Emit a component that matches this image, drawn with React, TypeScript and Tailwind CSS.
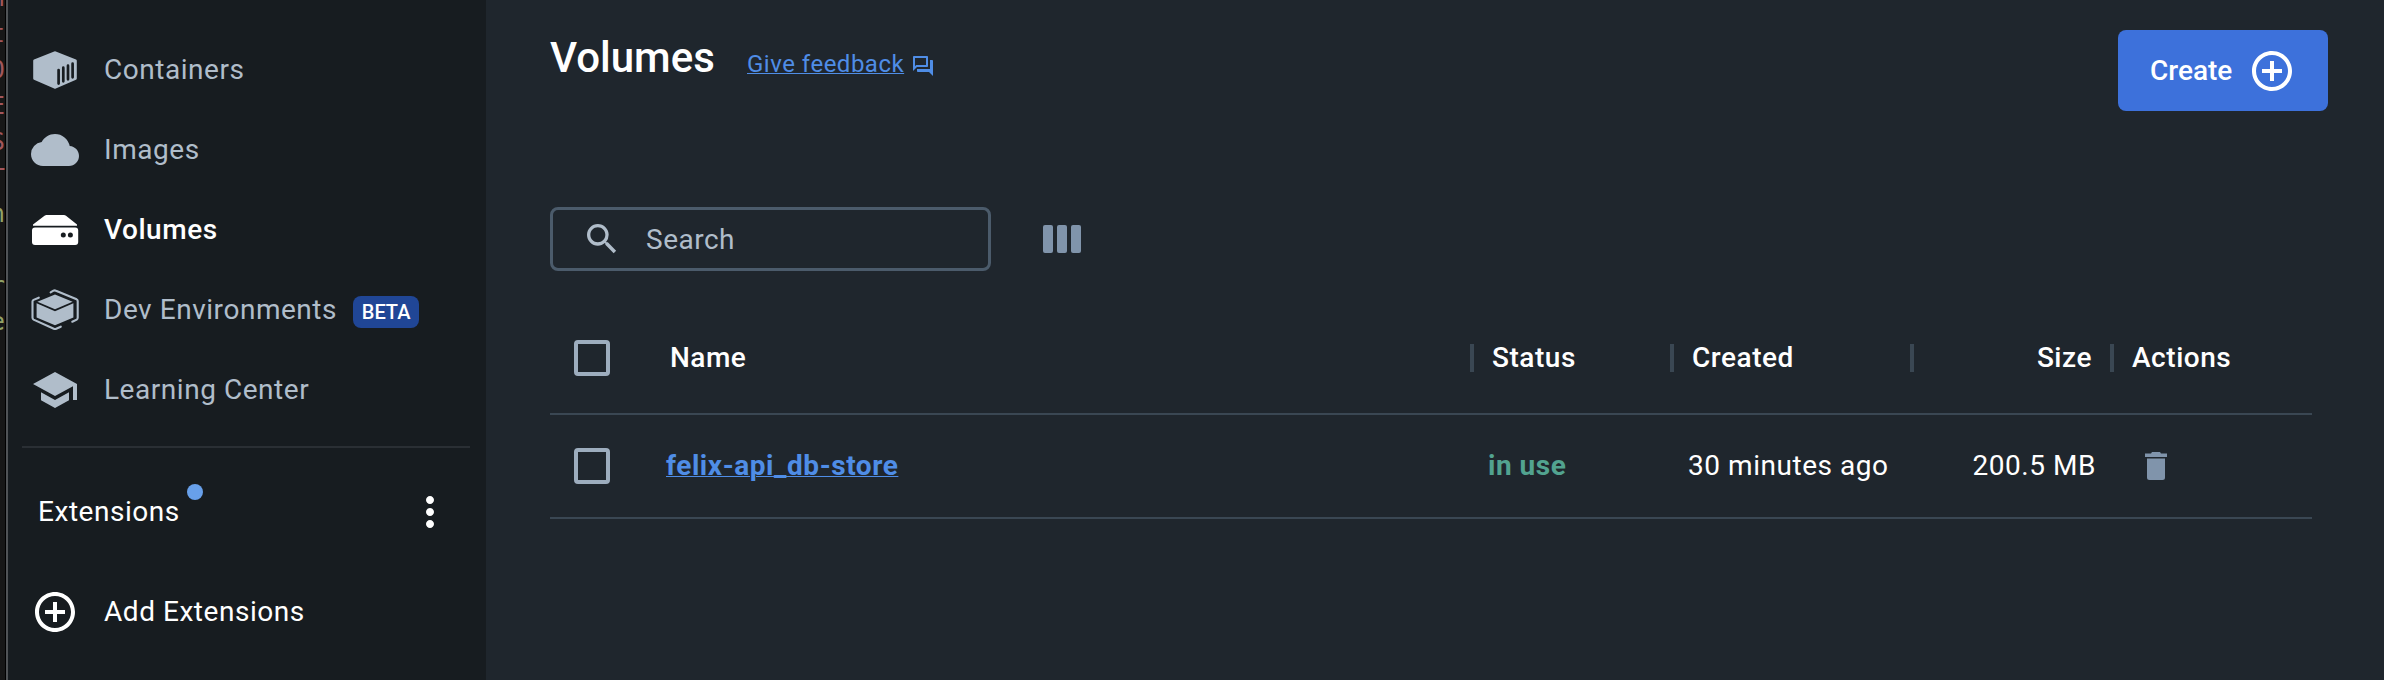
import type { ReactNode } from "react";
import {
  MdAddCircleOutline,
  MdCloud,
  MdMoreVert,
  MdOutlineForum,
  MdSchool,
  MdSearch,
} from "react-icons/md";

function ContainersIcon() {
  return (
    <svg viewBox="0 0 48 48" className="size-12">
      <path
        d="M23.2 5.4Q24 5 24.800 5.400L45 13.600Q45.800 14 45.800 14.800V32.600Q45.800 33.400 45 33.800L24.800 42.600Q24 43 23.200 42.600L3 33.800Q2.200 33.400 2.200 32.600V14.800Q2.200 14 3 13.600Z"
        fill="currentColor"
      />
      <path
        d="M27.600 24v13.600M32.300 21.700v13.600M37 19.700v13.600M41.600 17.700v13.600"
        stroke="#171c20"
        strokeWidth="2.700"
        strokeLinecap="round"
      />
    </svg>
  );
}

function VolumesIcon() {
  return (
    <svg viewBox="0 0 48 48" className="size-12">
      <path d="M15.500 9h17.500q1 0 2 .8L46 18.500V19.700H2V18.500L13.500 9.800q1-.8 2-.8Z" fill="currentColor" />
      <rect x="1" y="21.400" width="46.200" height="17.600" rx="3" fill="currentColor" />
      <circle cx="32.300" cy="29" r="2.500" fill="#171c20" />
      <circle cx="39.400" cy="29" r="2.500" fill="#171c20" />
    </svg>
  );
}

function DevIcon() {
  return (
    <svg viewBox="0 0 48 48" className="size-12">
      <path d="M24 8.600 41.600 15.800 24 23.200 6.400 15.800Z" fill="currentColor" />
      <path d="M5.600 17.200 24 25.300 42.400 17.200V31.500L24 39.200 5.600 31.500Z" fill="currentColor" />
      <path
        d="M19.600 6.300 22 4.900Q23.500 4 25 4.700L45.600 13.300Q46.700 13.900 46.700 15V31.800Q46.700 33 45.700 33.600L41.300 35.700M7.800 11.700 2.600 13.900Q1.500 14.500 1.500 15.600V31.800Q1.500 33 2.600 33.600L22.800 42.700Q24 43.300 25.200 42.700L29.800 40.700"
        fill="none"
        stroke="currentColor"
        strokeWidth="2.100"
        strokeLinecap="round"
      />
    </svg>
  );
}

function NavItem({
  icon,
  label,
  active = false,
  badge,
}: {
  icon: ReactNode;
  label: string;
  active?: boolean;
  badge?: string;
}) {
  return (
    <li
      className={
        active
          ? "flex h-20 items-center gap-[25px] pl-[23px] font-medium text-white"
          : "flex h-20 items-center gap-[25px] pl-[23px] text-[#b0bdca]"
      }
    >
      {icon}
      <span className="tracking-[0.54px]">{label}</span>
      {badge && (
        <span className="-ml-[9px] mt-1 flex h-8 w-[66px] items-center justify-center rounded-lg bg-[#204696] text-xl font-medium text-white">
          {badge}
        </span>
      )}
    </li>
  );
}

const editorGlyphs = [
  { ch: "n", cls: "text-[#a3575c]" },
  { ch: "t", cls: "text-[#a3575c]" },
  { ch: "0", cls: "text-[#a3575c]" },
  { ch: "E", cls: "text-[#a3575c]" },
  { ch: "S", cls: "text-[#a3575c]" },
  { ch: "T", cls: "text-[#a3575c]" },
  { ch: "n", cls: "text-[#93a367]" },
  { ch: "", cls: "" },
  { ch: "r", cls: "text-[#93a367]" },
  { ch: "e", cls: "text-[#93a367]" },
];

function Checkbox() {
  return <span className="block size-9 rounded-[4px] border-4 border-[#9dadbe]" />;
}

function Separator() {
  return <span className="h-7 w-1 shrink-0 bg-[#3a4753]" />;
}

const columns =
  "grid grid-cols-[116px_804px_200px_240px_200px_202px] items-center border-b-2 border-[#3a4753]";

export default function App() {
  return (
    <div className="flex h-[680px] w-[2384px] overflow-hidden bg-[#1f262d] font-[Roboto,sans-serif] text-[28px] leading-8 text-white">
      <div className="flex w-[5px] flex-col items-end overflow-hidden bg-[#171717] font-['DejaVu_Sans_Mono',monospace] text-2xl">
        <div className="-mt-5 flex flex-col items-end">
          {editorGlyphs.map((g, i) => (
            <span key={i} className={`h-9 leading-9 ${g.cls}`}>
              {g.ch}
            </span>
          ))}
        </div>
      </div>
      <div className="w-px bg-black" />
      <div className="w-0.5 bg-[#505356]" />

      <aside className="w-[478px] bg-[#171c20] pt-[30px]">
        <ul>
          <NavItem icon={<ContainersIcon />} label="Containers" />
          <NavItem icon={<MdCloud className="size-12" />} label="Images" />
          <NavItem icon={<VolumesIcon />} label="Volumes" active />
          <NavItem icon={<DevIcon />} label="Dev Environments" badge="BETA" />
          <NavItem icon={<MdSchool className="size-12" />} label="Learning Center" />
        </ul>
        <hr className="mt-4 ml-[14px] w-[448px] border-t-2 border-[#2a2f34]" />
        <div className="mt-10 flex h-12 items-center justify-between pr-8 pl-[30px]">
          <span className="relative tracking-[0.54px]">
            Extensions
            <span className="absolute -top-3 left-[149px] size-4 rounded-full bg-[#68a0ea]" />
          </span>
          <MdMoreVert className="size-12" />
        </div>
        <div className="mt-[52px] flex h-12 items-center gap-[25px] pl-[23px]">
          <MdAddCircleOutline className="size-12" />
          <span className="tracking-[0.54px]">Add Extensions</span>
        </div>
      </aside>

      <main className="flex-1 pt-[30px] pr-14 pl-16">
        <header className="flex h-[81px] items-start justify-between">
          <div className="flex items-baseline pt-px">
            <h1 className="w-[197px] text-[42px] leading-[54px] font-medium">Volumes</h1>
            <a className="flex items-center gap-[7px] text-2xl text-[#4f8de6]">
              <span className="tracking-[0.5px] underline decoration-1 underline-offset-1">
                Give feedback
              </span>
              <MdOutlineForum className="mt-1 size-6" />
            </a>
          </div>
          <button className="flex h-[81px] w-[210px] items-center gap-4 rounded-lg bg-[#3d71db] pl-[32px] font-medium">
            <span>Create</span>
            <MdAddCircleOutline className="size-12" />
          </button>
        </header>

        <div className="mt-24 flex h-16 items-center">
          <div className="flex h-16 w-[441px] items-center rounded-lg border-[3px] border-[#4b5b6b] pl-[29px] text-[#b0bdca]">
            <MdSearch className="size-10" />
            <span className="ml-6 pt-0.5 tracking-[0.5px]">Search</span>
          </div>
          <div className="ml-[52px] flex gap-1">
            <span className="h-7 w-[10px] rounded-[2px] bg-[#8094ab]" />
            <span className="h-7 w-[10px] rounded-[2px] bg-[#8094ab]" />
            <span className="h-7 w-[10px] rounded-[2px] bg-[#8094ab]" />
          </div>
        </div>

        <section className="mt-[31px] w-[1762px]">
          <div className={`${columns} h-[113px] font-medium`}>
            <div className="pl-6">
              <Checkbox />
            </div>
            <span className="pl-1 tracking-[0.5px]">Name</span>
            <div className="flex items-center gap-[18px]">
              <Separator />
              <span className="tracking-[0.54px]">Status</span>
            </div>
            <div className="flex items-center gap-[18px]">
              <Separator />
              <span className="tracking-[0.54px]">Created</span>
            </div>
            <div className="flex items-center justify-between pr-[18px]">
              <Separator />
              <span className="tracking-[0.54px]">Size</span>
            </div>
            <div className="flex items-center gap-[18px]">
              <Separator />
              <span className="tracking-[0.54px]">Actions</span>
            </div>
          </div>
          <div className={`${columns} h-[104px]`}>
            <div className="pl-6">
              <Checkbox />
            </div>
            <a className="font-bold tracking-[0.55px] text-[#4f8de6] underline decoration-1 underline-offset-1">
              felix-api_db-store
            </a>
            <span className="pl-[18px] font-bold tracking-[0.5px] text-[#52a390]">in use</span>
            <span className="pl-[18px] tracking-[0.54px]">30 minutes ago</span>
            <span className="pr-[14px] text-right tracking-[0.54px]">200.5 MB</span>
            <svg viewBox="0 0 22 28" className="ml-[35px] h-7 w-[22px]" fill="#8094ab">
              <path d="M0 1.500h6L7 0h8l1 1.500h6V5H0ZM2 6.500h18V25.500q0 2.500-2.500 2.500h-13Q2 28 2 25.500Z" />
            </svg>
          </div>
        </section>
      </main>
    </div>
  );
}
